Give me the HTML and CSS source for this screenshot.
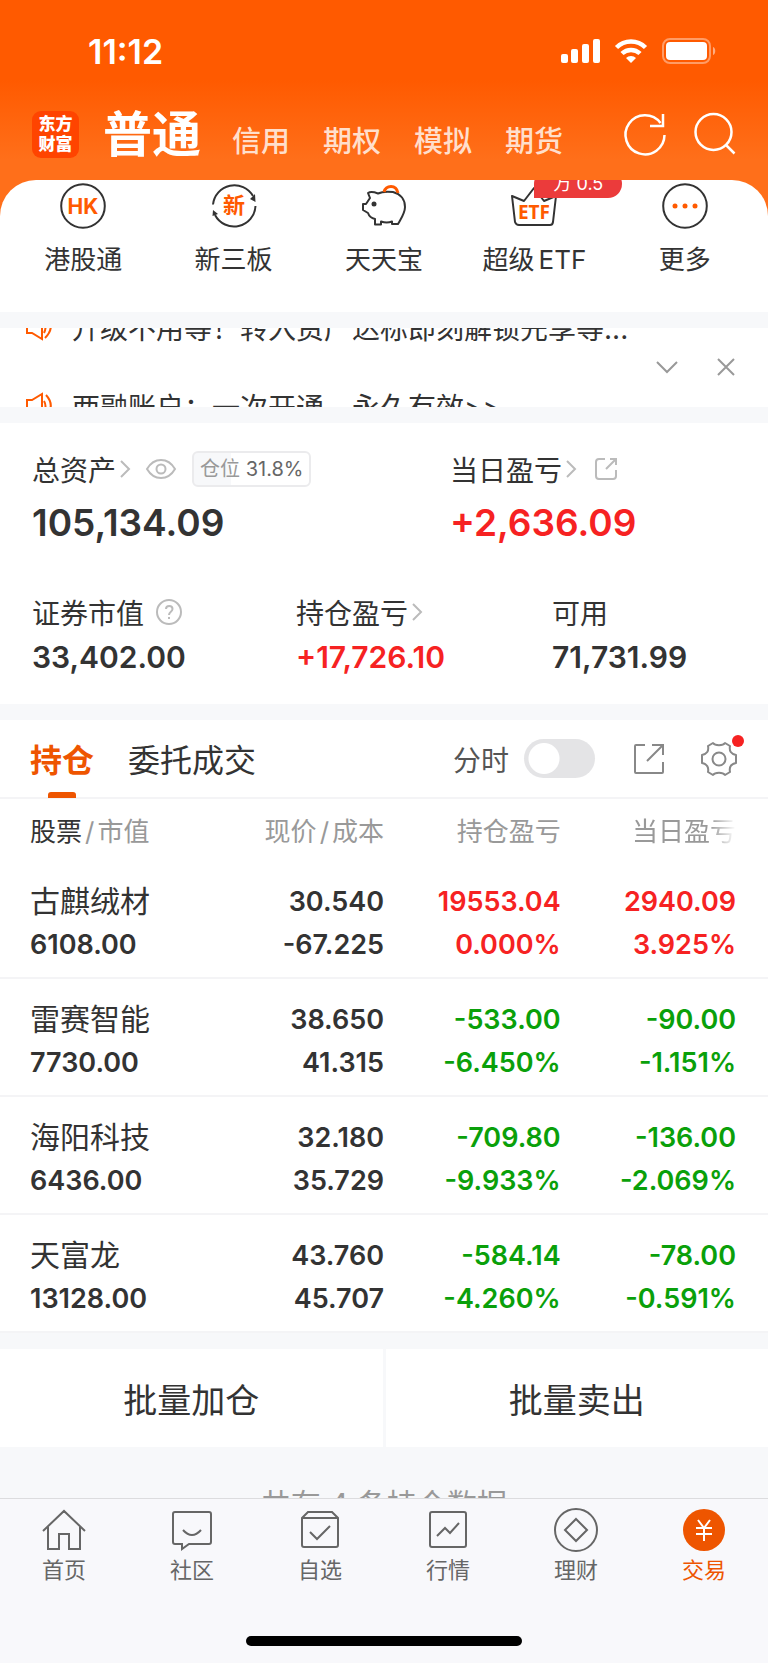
FILE: index.html
```
<!DOCTYPE html>
<html lang="zh-CN">
<head>
    <meta charset="UTF-8">
    <meta name="viewport" content="width=device-width, initial-scale=1.0">
    <title>交易 - 普通</title>
    <link rel="stylesheet" href="styles.css">
</head>
<body>
    <header class="header">
        <div class="status-bar">
            <span class="time">11:12</span>
            <div class="status-icons">
                <svg width="39" height="26" viewBox="0 0 39 26" fill="#fff">
                    <rect x="0" y="16" width="7" height="9" rx="2"/>
                    <rect x="10" y="11" width="7" height="14" rx="2"/>
                    <rect x="21" y="6" width="7" height="19" rx="2"/>
                    <rect x="32" y="1" width="7" height="24" rx="2"/>
                </svg>
                <svg width="32" height="26" viewBox="0 0 32 26" fill="none" stroke="#fff" stroke-width="5">
                    <path d="M1.500 9.500A20.500 20.500 0 0 1 30.500 9.500" stroke-width="4.500"/>
                    <path d="M7 15.500A13 13 0 0 1 25 15.500" stroke-width="4.500"/>
                    <path d="M16 25L11 20A7 7 0 0 1 21 20Z" fill="#fff" stroke="none"/>
                </svg>
                <svg width="54" height="26" viewBox="0 0 54 26">
                    <rect x="1" y="1" width="47" height="24" rx="7" fill="none" stroke="#fff" stroke-opacity=".4" stroke-width="2"/>
                    <rect x="4" y="4" width="41" height="18" rx="4" fill="#fff"/>
                    <path d="M51 9c3 1 3 7 0 8z" fill="#fff" fill-opacity=".5"/>
                </svg>
            </div>
        </div>
        <div class="nav-bar">
            <div class="logo"><span>东方</span><span>财富</span></div>
            <nav class="account-tabs">
                <a href="#" class="active">普通</a>
                <a href="#">信用</a>
                <a href="#">期权</a>
                <a href="#">模拟</a>
                <a href="#">期货</a>
            </nav>
            <button class="icon-btn" aria-label="刷新">
                <svg width="42" height="42" viewBox="0 0 42 42" fill="none" stroke="#fff" stroke-width="2.500">
                    <path d="M40.500 22A19.500 19.500 0 1 1 36.500 10"/>
                    <path d="M39 1V13H26"/>
                </svg>
            </button>
            <button class="icon-btn" aria-label="搜索">
                <svg width="42" height="42" viewBox="0 0 42 42" fill="none" stroke="#fff" stroke-width="2.500">
                    <circle cx="19.500" cy="19" r="18"/>
                    <path d="M32 32L40.500 40.500"/>
                </svg>
            </button>
        </div>
    </header>

    <main>
        <div class="quick-wrap">
            <section class="quick">
                <a href="#">
                    <svg width="48" height="48" viewBox="0 0 48 48">
                        <circle cx="24" cy="24" r="21.800" fill="none" stroke="#333" stroke-width="2"/>
                        <text x="24" y="32" class="icon-hk">HK</text>
                    </svg>
                    <span>港股通</span>
                </a>
                <a href="#">
                    <svg width="48" height="48" viewBox="0 0 48 48">
                        <g fill="none" stroke="#333" stroke-width="2">
                            <path d="M3 22.500A21.500 21.500 0 0 1 43 14"/>
                            <path d="M45.500 24A21.500 21.500 0 0 1 5 33"/>
                        </g>
                        <path d="M45 12L40 17L45.500 20ZM3 28L8 32L2.500 34Z" fill="#333"/>
                        <text x="24" y="31" class="icon-new">新</text>
                    </svg>
                    <span>新三板</span>
                </a>
                <a href="#">
                    <svg width="48" height="48" viewBox="0 0 48 48" fill="none" stroke-width="2" stroke-linejoin="round">
                        <path d="M8 11C11 9 14 10 18 11.500C22 9.500 28 9.500 33 10C41 12 45 18 45 25C45 31 42 35 38 42H32V39.500C28 41 24 40.500 21 39.500V42.500H15V37C11 36 9 34 8 31L3 28V22H6L10 16Z" stroke="#333"/>
                        <path d="M24 10C26 3 36 2 38 11" stroke="#ff5a00" stroke-width="3"/>
                        <circle cx="14" cy="22" r="2.500" fill="#333"/>
                    </svg>
                    <span>天天宝</span>
                </a>
                <a href="#">
                    <svg width="48" height="48" viewBox="0 0 48 48">
                        <path d="M2 14L14 19L24 6L34 19L46 14L43 40Q42.500 43 40 43H9Q6 43 5 40Z" fill="none" stroke="#333" stroke-width="2" stroke-linejoin="round"/>
                        <text x="24" y="37" class="icon-etf">ETF</text>
                    </svg>
                    <span>超级<span class="latin">ETF</span></span>
                    <em class="badge">万 0.5</em>
                </a>
                <a href="#">
                    <svg width="48" height="48" viewBox="0 0 48 48">
                        <circle cx="24" cy="24" r="21.800" fill="none" stroke="#333" stroke-width="2"/>
                        <g fill="#ff5a00">
                            <circle cx="14" cy="24" r="2.500"/>
                            <circle cx="24" cy="24" r="2.500"/>
                            <circle cx="34" cy="24" r="2.500"/>
                        </g>
                    </svg>
                    <span>更多</span>
                </a>
            </section>
        </div>

        <section class="notice">
            <div class="notice-list">
                <p>
                    <svg width="28" height="28" viewBox="0 0 28 28" fill="none" stroke="#ff5a00" stroke-width="2">
                        <path d="M1 8H6L16 2V26L6 20H1Z"/>
                        <path d="M18 9Q21 14 18 20M20 3Q30 14 19 25"/>
                    </svg>
                    <span>升级不用等！转入资产达标即刻解锁先享等...</span>
                </p>
                <p>
                    <svg width="28" height="28" viewBox="0 0 28 28" fill="none" stroke="#ff5a00" stroke-width="2">
                        <path d="M1 8H6L16 2V26L6 20H1Z"/>
                        <path d="M18 9Q21 14 18 20M20 3Q30 14 19 25"/>
                    </svg>
                    <span>两融账户：一次开通，永久有效&gt;&gt;</span>
                </p>
            </div>
            <div class="notice-actions">
                <button class="icon-btn" aria-label="展开">
                    <svg width="20" height="20" viewBox="0 0 20 20" fill="none" stroke="#999" stroke-width="2"><path d="M0 5L10 15L20 5"/></svg>
                </button>
                <button class="icon-btn" aria-label="关闭">
                    <svg width="20" height="20" viewBox="0 0 20 20" fill="none" stroke="#999" stroke-width="2"><path d="M2 2L18 18M18 2L2 18"/></svg>
                </button>
            </div>
        </section>

        <section class="assets">
            <div class="assets-row total">
                <div>
                    <div class="label">
                        总资产
                        <svg class="arrow" width="10" height="18" viewBox="0 0 10 18"><path d="M1 1L9 9L1 17"/></svg>
                        <svg class="eye" width="30" height="22" viewBox="0 0 30 22"><path d="M1 11C8 -1 22 -1 29 11C22 23 8 23 1 11Z"/><circle cx="15" cy="11" r="4.500"/></svg>
                        <span class="position-tag">仓位 <b>31.8%</b></span>
                    </div>
                    <div class="value">105,134.09</div>
                </div>
                <div>
                    <div class="label">
                        当日盈亏
                        <svg class="arrow" width="10" height="18" viewBox="0 0 10 18"><path d="M1 1L9 9L1 17"/></svg>
                        <svg class="share" width="24" height="24" viewBox="0 0 24 24"><path d="M11 2H5Q2 2 2 5V19Q2 22 5 22H19Q22 22 22 19V13M16 2H22V8M22 2L12 12"/></svg>
                    </div>
                    <div class="value up">+2,636.09</div>
                </div>
            </div>
            <div class="assets-row detail">
                <div>
                    <div class="label">
                        证券市值
                        <svg class="help" width="26" height="26" viewBox="0 0 26 26"><circle cx="13" cy="13" r="12"/><path d="M10 10C10 6 16.500 6 16.500 10C16.500 13 13 12.500 13 16M13 18V20"/></svg>
                    </div>
                    <div class="value">33,402.00</div>
                </div>
                <div>
                    <div class="label">
                        持仓盈亏
                        <svg class="arrow" width="10" height="18" viewBox="0 0 10 18"><path d="M1 1L9 9L1 17"/></svg>
                    </div>
                    <div class="value up">+17,726.10</div>
                </div>
                <div>
                    <div class="label">可用</div>
                    <div class="value">71,731.99</div>
                </div>
            </div>
        </section>

        <section class="holdings">
            <div class="toolbar">
                <button class="tab active">持仓</button>
                <button class="tab">委托成交</button>
                <label class="toggle-label" for="minute-chart">分时</label>
                <input type="checkbox" class="toggle" id="minute-chart">
                <button class="icon-btn" aria-label="分享">
                    <svg width="32" height="32" viewBox="0 0 32 32" fill="none" stroke="#888" stroke-width="2"><path d="M12 2H3Q2 2 2 3V29Q2 30 3 30H29Q30 30 30 29V19M19 2H30V12M30 2L14 18"/></svg>
                </button>
                <button class="icon-btn settings" aria-label="设置">
                    <svg width="36" height="36" viewBox="0 0 36 36" fill="none" stroke="#888" stroke-width="2" stroke-linejoin="round">
                        <path d="M12 2C14 5 22 5 24 2L29 5C28 10 30 13 35 14V22C30 23 28 26 29 31L24 34C22 31 14 31 12 34L7 31C8 26 6 23 1 22V14C6 13 8 10 7 5Z"/>
                        <circle cx="18" cy="18" r="6.500"/>
                    </svg>
                </button>
            </div>
            <table>
                <thead>
                    <tr>
                        <th><b>股票</b><i>/</i>市值</th>
                        <th>现价<i>/</i>成本</th>
                        <th>持仓盈亏</th>
                        <th><span class="fade">当日盈亏</span></th>
                    </tr>
                </thead>
                <tbody>
                    <tr>
                        <td><span class="name">古麒绒材</span>6108.00</td>
                        <td>30.540<br>-67.225</td>
                        <td class="up">19553.04<br>0.000%</td>
                        <td class="up">2940.09<br>3.925%</td>
                    </tr>
                    <tr>
                        <td><span class="name">雷赛智能</span>7730.00</td>
                        <td>38.650<br>41.315</td>
                        <td class="down">-533.00<br>-6.450%</td>
                        <td class="down">-90.00<br>-1.151%</td>
                    </tr>
                    <tr>
                        <td><span class="name">海阳科技</span>6436.00</td>
                        <td>32.180<br>35.729</td>
                        <td class="down">-709.80<br>-9.933%</td>
                        <td class="down">-136.00<br>-2.069%</td>
                    </tr>
                    <tr>
                        <td><span class="name">天富龙</span>13128.00</td>
                        <td>43.760<br>45.707</td>
                        <td class="down">-584.14<br>-4.260%</td>
                        <td class="down">-78.00<br>-0.591%</td>
                    </tr>
                </tbody>
            </table>
        </section>

        <div class="batch">
            <button>批量加仓</button>
            <button>批量卖出</button>
        </div>
        <p class="summary">共有 4 条持仓数据</p>
    </main>

    <footer class="tab-bar">
        <nav>
            <a href="#">
                <svg width="44" height="44" viewBox="0 0 44 44"><path d="M1 22L22 2L43 22M6 18V40H17V25H27V40H38V18"/></svg>
                首页
            </a>
            <a href="#">
                <svg width="44" height="44" viewBox="0 0 44 44"><path d="M5 3H39Q41 3 41 5V33Q41 35 39 35H19L12 40V35H5Q3 35 3 33V5Q3 3 5 3ZM13 21Q22 31 31 21"/></svg>
                社区
            </a>
            <a href="#">
                <svg width="44" height="44" viewBox="0 0 44 44"><path d="M4 9L10 3H34L40 9V36Q40 38 38 38H6Q4 38 4 36ZM4 9H40M12 23L19 30L32 17"/></svg>
                自选
            </a>
            <a href="#">
                <svg width="44" height="44" viewBox="0 0 44 44"><path d="M6 3H38Q40 3 40 5V36Q40 38 38 38H6Q4 38 4 36V5Q4 3 6 3ZM11 27L19 19L24 24L33 14"/></svg>
                行情
            </a>
            <a href="#">
                <svg width="44" height="44" viewBox="0 0 44 44"><circle cx="22" cy="21" r="21"/><path d="M22 10L33 21L22 32L11 21Z"/></svg>
                理财
            </a>
            <a href="#" class="active">
                <svg width="44" height="44" viewBox="0 0 44 44"><circle cx="22" cy="21" r="21"/><path d="M16 11L22 19L28 11M14 19H30M14 25H30M22 19V32"/></svg>
                交易
            </a>
        </nav>
        <div class="home-indicator"></div>
    </footer>
</body>
</html>
```
FILE: styles.css
```
* {
    box-sizing: border-box;
}
body {
    margin: 0;
    height: 100vh;
    display: flex;
    flex-direction: column;
    overflow: hidden;
    background-color: #f7f8fa;
    color: #333;
    font-family: Inter, "Noto Sans CJK SC", sans-serif;
    font-size: 26px;
}
a {
    color: inherit;
    text-decoration: none;
}
button {
    padding: 0;
    border: none;
    background: none;
    color: inherit;
    font: inherit;
    cursor: pointer;
}
svg {
    display: block;
    flex: none;
    overflow: visible;
}
p {
    margin: 0;
}
.icon-btn {
    display: block;
}
.up {
    color: #f62222;
}
.down {
    color: #0aa00a;
}

/* header */
.header {
    flex: none;
    padding-bottom: 15px;
    background: linear-gradient(#ff5a00 80px, #ff6f1a 160px);
    color: #fff;
}
.status-bar {
    display: flex;
    align-items: center;
    justify-content: space-between;
    height: 102px;
    padding: 0 52px 0 88px;
}
.time {
    font-size: 34px;
    font-weight: 600;
}
.status-icons {
    display: flex;
    gap: 15px;
}
.nav-bar {
    display: flex;
    align-items: center;
    gap: 28px;
    height: 62px;
    margin-top: 1px;
    padding: 0 32px;
}
.logo {
    display: flex;
    flex-direction: column;
    align-items: center;
    justify-content: center;
    width: 47px;
    height: 47px;
    border-radius: 9px;
    background-color: #ff4400;
    font-size: 17px;
    font-weight: 900;
    line-height: 20px;
}
.account-tabs {
    display: flex;
    align-items: baseline;
    gap: 33px;
    flex: 1;
    margin-left: -4px;
    padding-top: 8px;
    font-size: 29px;
    font-weight: 500;
    line-height: 60px;
}
.account-tabs a {
    color: #ffdfcc;
}
.account-tabs .active {
    margin-right: -2px;
    color: #fff;
    font-size: 49px;
    font-weight: 700;
}

main {
    flex: 1;
    min-height: 0;
    overflow: hidden;
}

/* quick entries */
.quick-wrap {
    background-color: #ff6f1a;
}
.quick {
    display: grid;
    grid-template-columns: repeat(5, 1fr);
    height: 132px;
    padding: 2px 8px 0;
    border-radius: 36px 36px 0 0;
    background-color: #fff;
    overflow: hidden;
}
.quick a {
    position: relative;
    display: flex;
    flex-direction: column;
    align-items: center;
    gap: 12px;
    line-height: 36px;
}
.quick text {
    fill: #ff5a00;
    text-anchor: middle;
    font-weight: 700;
}
.icon-hk {
    font-size: 21px;
}
.icon-new {
    font-size: 22px;
}
.icon-etf {
    font-family: "Noto Sans", sans-serif;
    font-size: 19px;
}
.latin {
    margin-left: 4px;
}
.badge {
    position: absolute;
    top: -12px;
    left: 50%;
    width: 88px;
    height: 28px;
    border-radius: 14px 14px 14px 0;
    background-color: #eb3b3b;
    color: #fff;
    font-size: 18px;
    font-style: normal;
    line-height: 28px;
    text-align: center;
}

/* scrolling notices */
.notice {
    display: flex;
    justify-content: space-between;
    align-items: center;
    height: 79px;
    margin: 16px 0;
    padding: 0 32px 2px 26px;
    background-color: #fff;
    overflow: hidden;
}
.notice p {
    display: flex;
    align-items: center;
    gap: 18px;
    height: 79px;
    font-size: 28px;
    white-space: nowrap;
}
.notice-actions {
    display: flex;
    gap: 39px;
}

/* assets */
.assets {
    padding: 23px 32px 25px;
    background-color: #fff;
}
.assets-row {
    display: grid;
}
.total {
    grid-template-columns: 418fr 286fr;
}
.detail {
    grid-template-columns: 264fr 256fr 184fr;
    margin-top: 35px;
}
.label {
    display: flex;
    align-items: center;
    height: 46px;
    font-size: 28px;
}
.label svg {
    fill: none;
    stroke: #bbb;
    stroke-width: 2;
}
.label .arrow {
    margin-left: 4px;
}
.eye {
    margin-left: 16px;
}
.share {
    margin-left: 18px;
}
.help {
    margin-left: 12px;
}
.position-tag {
    height: 36px;
    margin-left: 16px;
    padding: 0 6px;
    border: 2px solid #ebebed;
    border-radius: 6px;
    background: linear-gradient(to right, #f7f8fa 32%, #fff 32%);
    color: #999;
    font-size: 20px;
    line-height: 32px;
}
.position-tag b {
    color: #666;
    font-weight: 400;
}
.value {
    font-weight: 600;
}
.total .value {
    font-size: 37px;
    line-height: 62px;
}
.detail .value {
    font-size: 30px;
    line-height: 44px;
}

/* holdings */
.holdings {
    margin-top: 16px;
    background-color: #fff;
}
.toolbar {
    display: flex;
    align-items: center;
    height: 79px;
    padding: 0 31px 0 30px;
    border-bottom: 2px solid #f4f4f6;
}
.tab {
    position: relative;
    height: 79px;
    margin-right: 34px;
    padding-bottom: 2px;
    font-size: 32px;
}
.tab.active {
    color: #ee5500;
    font-weight: 700;
}
.tab.active::after {
    content: "";
    position: absolute;
    bottom: 0;
    left: 50%;
    width: 28px;
    height: 6px;
    margin-left: -14px;
    border-radius: 3px 3px 0 0;
    background-color: #ee5500;
}
.toggle-label {
    margin-left: auto;
    color: #555;
    font-size: 28px;
}
.toggle {
    appearance: none;
    width: 71px;
    height: 39px;
    margin: 0 38px 0 15px;
    border-radius: 20px;
    background: radial-gradient(circle at 20px 50%, #fff 15px, #e4e4e6 16px);
}
.toggle:checked {
    background: radial-gradient(circle at 51px 50%, #fff 15px, #ee5500 16px);
}
.settings {
    position: relative;
    margin-left: 36px;
}
.settings::after {
    content: "";
    position: absolute;
    top: -6px;
    right: -7px;
    width: 12px;
    height: 12px;
    border-radius: 50%;
    background-color: #f62222;
}
table {
    width: 100%;
    border-collapse: collapse;
    table-layout: fixed;
}
th {
    height: 62px;
    padding: 0 0 2px;
    color: #999;
    font-weight: 400;
    text-align: right;
}
th:nth-child(3) {
    width: 23%;
}
th:nth-child(4) {
    width: 27%;
}
th b {
    color: #333;
    font-weight: 400;
}
th i {
    margin: 0 3px;
    font-style: normal;
}
.fade {
    -webkit-mask-image: linear-gradient(to right, #000 75%, transparent);
    mask-image: linear-gradient(to right, #000 75%, transparent);
}
td {
    padding: 19px 0 11px;
    border-bottom: 2px solid #f4f4f6;
    font-size: 27px;
    font-weight: 600;
    line-height: 43px;
    text-align: right;
}
th:first-child,
td:first-child {
    padding-left: 30px;
    text-align: left;
}
th:last-child,
td:last-child {
    padding-right: 32px;
}
.name {
    display: block;
    font-size: 30px;
    font-weight: 400;
}
.batch {
    display: grid;
    grid-template-columns: 1fr 1fr;
    gap: 3px;
    margin-top: 16px;
}
.batch button {
    height: 98px;
    background-color: #fff;
    font-size: 34px;
}
.summary {
    padding-top: 35px;
    color: #999;
    font-size: 30px;
    line-height: 44px;
    text-align: center;
}

/* bottom tabs */
.tab-bar {
    flex: none;
    padding-bottom: 17px;
    border-top: 1px solid #dcdcde;
    background-color: #f8f8fb;
}
.tab-bar nav {
    display: grid;
    grid-template-columns: repeat(6, 1fr);
    height: 137px;
    padding-top: 10px;
}
.tab-bar a {
    display: flex;
    flex-direction: column;
    align-items: center;
    gap: 2px;
    color: #666;
    font-size: 22px;
    line-height: 30px;
}
.tab-bar svg {
    fill: none;
    stroke: #666;
    stroke-width: 2;
}
.tab-bar .active {
    color: #ee5500;
}
.tab-bar .active svg {
    stroke: #fff;
}
.tab-bar .active circle {
    fill: #ee5500;
    stroke: none;
}
.home-indicator {
    width: 36%;
    height: 10px;
    margin: 0 auto;
    border-radius: 5px;
    background-color: #000;
}
```
